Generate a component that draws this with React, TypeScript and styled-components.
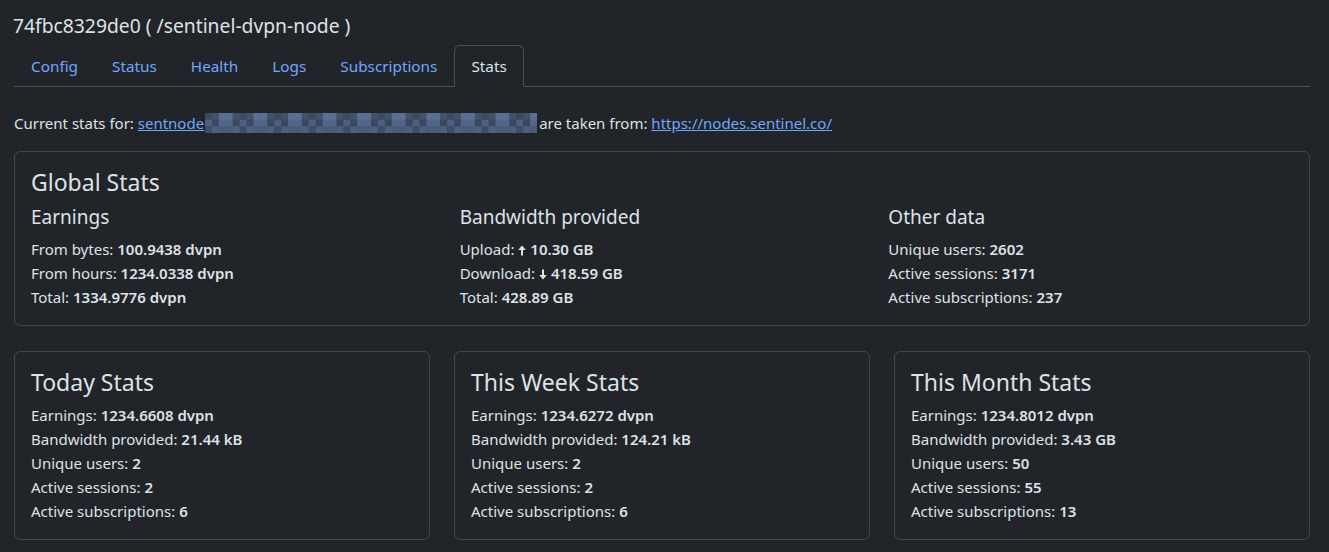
import React from "react";
import styled, { createGlobalStyle } from "styled-components";

const Global = createGlobalStyle`
  html, body { margin: 0; padding: 0; background: #212529; }
  body {
    color: #dee2e6;
    font-family: "Noto Sans", "DejaVu Sans", sans-serif;
    font-size: 15px;
    line-height: 24px;
  }
  * { box-sizing: border-box; }
`;

const Page = styled.div`
  padding: 14px 19px 12px 14px;
`;

const Title = styled.h1`
  margin: 0 0 7px -1px;
  font-size: 19.3px;
  font-weight: 400;
  line-height: 24px;
`;

const Tabs = styled.ul`
  display: flex;
  list-style: none;
  margin: 0;
  padding: 0;
  border-bottom: 1px solid #495057;
`;

const Tab = styled.li<{ $active?: boolean }>`
  margin-bottom: -1px;
  padding: 8px 16px;
  font-size: 15.3px;
  line-height: 24px;
  border: 1px solid ${(p) => (p.$active ? "#495057" : "transparent")};
  border-bottom-color: ${(p) => (p.$active ? "#212529" : "transparent")};
  border-radius: 6px 6px 0 0;
  background: ${(p) => (p.$active ? "#212529" : "transparent")};
  color: ${(p) => (p.$active ? "#dee2e6" : "#6ea8fe")};
  cursor: pointer;
`;

const Intro = styled.p`
  margin: 24px 0 16px;
  display: flex;
  align-items: center;
  white-space: nowrap;
`;

const Link = styled.a`
  color: #6ea8fe;
  text-decoration: underline;
`;

const Mosaic = styled.svg`
  display: block;
  margin: 0 2px 0 1px;
`;

const Card = styled.section`
  border: 1px solid rgba(255, 255, 255, 0.15);
  border-radius: 6px;
  padding: 16px;
`;

const CardTitle = styled.h4<{ $tight?: boolean }>`
  margin: 0 0 ${(p) => (p.$tight ? 6 : 8)}px;
  font-size: 23px;
  font-weight: 400;
  line-height: 29px;
`;

const SubTitle = styled.h5`
  margin: 0 0 8px;
  font-size: 19px;
  font-weight: 400;
  line-height: 24px;
`;

const Columns = styled.div`
  display: grid;
  grid-template-columns: repeat(3, 1fr);
  column-gap: 24px;
`;

const CardRow = styled.div`
  display: grid;
  grid-template-columns: repeat(3, 1fr);
  gap: 24px;
  margin-top: 25px;
`;

const Line = styled.div`
  height: 24px;
  line-height: 24px;
`;

const Val = styled.b`
  font-weight: 600;
`;

const ArrowSvg = styled.svg`
  display: inline-block;
  vertical-align: -1px;
  margin-right: 4px;
`;

function Arrow({ down }: { down?: boolean }) {
  return (
    <ArrowSvg width="8" height="11" viewBox="0 0 8 11">
      <g transform={down ? "rotate(180 4 5.5)" : undefined} fill="#dee2e6">
        <path d="M4 0.5 L7.8 5 L5 5 L5 10.5 L3 10.5 L3 5 L0.2 5 Z" />
      </g>
    </ArrowSvg>
  );
}

const mosaicColors = ["#3a4860", "#42526d", "#4a5c7a", "#52668a", "#5a6f93", "#3f4e68", "#4d6080"];

function MosaicImage() {
  const cols = 48;
  const rows = 3;
  const w = 332;
  const h = 20;
  const cw = w / cols;
  const rh = h / rows;
  const rects = [];
  for (let r = 0; r < rows; r++) {
    for (let c = 0; c < cols; c++) {
      const idx = (c * 7 + r * 13 + ((c * c + r * 5) % 5)) % mosaicColors.length;
      rects.push(
        <rect key={`${r}-${c}`} x={c * cw} y={r * rh} width={cw + 0.5} height={rh + 0.5} fill={mosaicColors[idx]} />
      );
    }
  }
  return (
    <Mosaic width={w} height={h} viewBox={`0 0 ${w} ${h}`}>
      {rects}
    </Mosaic>
  );
}

type Item = { label: string; value: React.ReactNode };

function Lines({ items }: { items: Item[] }) {
  return (
    <>
      {items.map((it) => (
        <Line key={it.label}>
          {it.label}: <Val>{it.value}</Val>
        </Line>
      ))}
    </>
  );
}

const periods: { title: string; items: Item[] }[] = [
  {
    title: "Today Stats",
    items: [
      { label: "Earnings", value: "1234.6608 dvpn" },
      { label: "Bandwidth provided", value: "21.44 kB" },
      { label: "Unique users", value: "2" },
      { label: "Active sessions", value: "2" },
      { label: "Active subscriptions", value: "6" },
    ],
  },
  {
    title: "This Week Stats",
    items: [
      { label: "Earnings", value: "1234.6272 dvpn" },
      { label: "Bandwidth provided", value: "124.21 kB" },
      { label: "Unique users", value: "2" },
      { label: "Active sessions", value: "2" },
      { label: "Active subscriptions", value: "6" },
    ],
  },
  {
    title: "This Month Stats",
    items: [
      { label: "Earnings", value: "1234.8012 dvpn" },
      { label: "Bandwidth provided", value: "3.43 GB" },
      { label: "Unique users", value: "50" },
      { label: "Active sessions", value: "55" },
      { label: "Active subscriptions", value: "13" },
    ],
  },
];

export default function App() {
  const tabs = ["Config", "Status", "Health", "Logs", "Subscriptions", "Stats"];
  return (
    <Page>
      <Global />
      <Title>74fbc8329de0 ( /sentinel-dvpn-node )</Title>
      <Tabs>
        {tabs.map((t) => (
          <Tab key={t} $active={t === "Stats"}>
            {t}
          </Tab>
        ))}
      </Tabs>
      <Intro>
        Current stats for:&nbsp;<Link href="#">sentnode</Link>
        <MosaicImage />
        are taken from:&nbsp;<Link href="#">https://nodes.sentinel.co/</Link>
      </Intro>
      <Card>
        <CardTitle>Global Stats</CardTitle>
        <Columns>
          <div>
            <SubTitle>Earnings</SubTitle>
            <Lines
              items={[
                { label: "From bytes", value: "100.9438 dvpn" },
                { label: "From hours", value: "1234.0338 dvpn" },
                { label: "Total", value: "1334.9776 dvpn" },
              ]}
            />
          </div>
          <div>
            <SubTitle>Bandwidth provided</SubTitle>
            <Lines
              items={[
                { label: "Upload", value: <><Arrow />10.30 GB</> },
                { label: "Download", value: <><Arrow down />418.59 GB</> },
                { label: "Total", value: "428.89 GB" },
              ]}
            />
          </div>
          <div>
            <SubTitle>Other data</SubTitle>
            <Lines
              items={[
                { label: "Unique users", value: "2602" },
                { label: "Active sessions", value: "3171" },
                { label: "Active subscriptions", value: "237" },
              ]}
            />
          </div>
        </Columns>
      </Card>
      <CardRow>
        {periods.map((p) => (
          <Card key={p.title}>
            <CardTitle $tight>{p.title}</CardTitle>
            <Lines items={p.items} />
          </Card>
        ))}
      </CardRow>
    </Page>
  );
}
